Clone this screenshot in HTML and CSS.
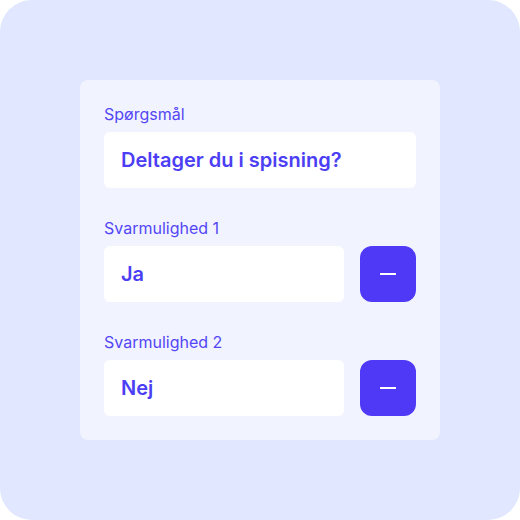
FILE: index.html
```html
<!DOCTYPE html>
<html>
<head>
<meta charset="utf-8">
<link rel="stylesheet" href="styles.css">
</head>
<body>
<div class="frame">
  <div class="card">
    <div class="field">
      <div class="label">Spørgsmål</div>
      <div class="input">Deltager du i spisning?</div>
    </div>
    <div class="field">
      <div class="label">Svarmulighed 1</div>
      <div class="row">
        <div class="input">Ja</div>
        <button class="remove" aria-label="Fjern"><span class="minus"></span></button>
      </div>
    </div>
    <div class="field">
      <div class="label">Svarmulighed 2</div>
      <div class="row">
        <div class="input">Nej</div>
        <button class="remove" aria-label="Fjern"><span class="minus"></span></button>
      </div>
    </div>
  </div>
</div>
</body>
</html>
```
FILE: styles.css
```css
html, body {
  margin: 0;
  padding: 0;
  background: #ffffff;
}
.frame {
  width: 520px;
  height: 520px;
  background: #e0e7ff;
  border-radius: 32px;
  display: flex;
  align-items: center;
  justify-content: center;
  font-family: Inter, "Noto Sans", sans-serif;
}
.card {
  width: 360px;
  box-sizing: border-box;
  background: #f1f4ff;
  border-radius: 8px;
  padding: 24px;
  display: flex;
  flex-direction: column;
  gap: 30px;
}
.field {
  display: flex;
  flex-direction: column;
  gap: 8px;
}
.label {
  color: #5446f5;
  font-size: 16px;
  line-height: 20px;
  font-weight: 400;
}
.row {
  display: flex;
  gap: 16px;
}
.input {
  flex: none;
  height: 56px;
  box-sizing: border-box;
  background: #ffffff;
  border-radius: 6px;
  padding: 0 17px;
  display: flex;
  align-items: center;
  color: #4b3ef4;
  font-size: 20px;
  font-weight: 600;
}
.row .input {
  flex: 1;
}
.remove {
  width: 56px;
  height: 56px;
  flex: none;
  border: none;
  border-radius: 12px;
  background: #4f39f6;
  display: flex;
  align-items: center;
  justify-content: center;
  padding: 0;
}
.minus {
  width: 16px;
  height: 2px;
  background: #ffffff;
}
```
